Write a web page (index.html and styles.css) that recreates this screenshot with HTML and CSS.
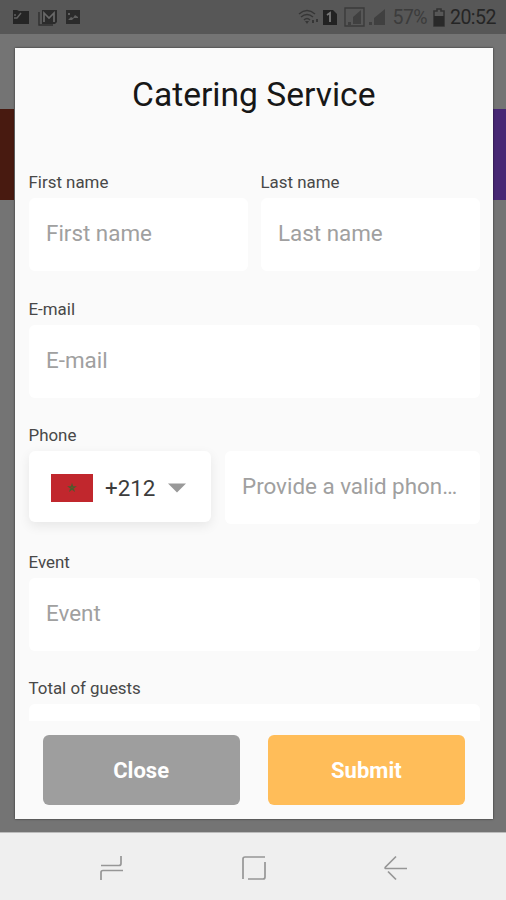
FILE: index.html
```
<!DOCTYPE html>
<html lang="en">
<head>
<meta charset="utf-8">
<title>Catering Service</title>
<link rel="stylesheet" href="styles.css">
</head>
<body>
<div class="phone">
  <header class="status">
    <div class="notifications">
      <svg width="18" height="16" viewBox="0 0 18 16"><path fill="#252525" d="M1 1h4l2 1h10v13H1z"/><path fill="none" stroke="#626262" stroke-width="1.4" d="M2 9l3 0 4-5M3 5v2"/></svg>
      <svg width="21" height="17" viewBox="0 0 21 17"><path fill="#2b2b2b" d="M5 1h15v12l-2 2H5z"/><path fill="none" stroke="#696969" stroke-width="1.7" d="M7 13V4l5 5 5-5v9"/><path fill="none" stroke="#303030" stroke-width="1.4" d="M2 3v13h14"/></svg>
      <svg width="16" height="16" viewBox="0 0 16 16"><path fill="#2b2b2b" d="M1 1h14v14H1z"/><path fill="#606060" d="M3 4h2v2H3zM3 11l3-3 2 1 2-3 3 2v1H9l-2 2z"/></svg>
    </div>
    <div class="system">
      <svg class="wifi" width="21" height="18" viewBox="0 0 21 18"><g fill="none" stroke="#363636" stroke-width="1.5"><path d="M1 6q8-7 16 0M3 9q6-5 12 0M6 12q3-3 6 0"/></g><path fill="#363636" d="M7 13h4l-2 3zM14 12h2v3h-2zM18 11h2v3h-2z"/></svg>
      <svg class="sim" width="16" height="17" viewBox="0 0 16 17"><path fill="#222" d="M1 1h10l4 4v11H1z"/><path fill="none" stroke="#777" stroke-width="1.8" d="M5 6l3-2v9"/></svg>
      <svg class="signal" width="21" height="20" viewBox="0 0 21 20"><path fill="none" stroke="#3b3b3b" stroke-width="1.4" d="M1 1h19v18H1z"/><path fill="#404040" d="M9 10l8-7v14H9zM4 15h3v3H4z"/></svg>
      <svg class="signal2" width="18" height="18" viewBox="0 0 18 18"><path fill="#404040" d="M6 10l11-9v16H6zM1 14h3v3H1z"/></svg>
      <span class="percent">57%</span>
      <svg class="battery" width="12" height="19" viewBox="0 0 12 19"><path fill="none" stroke="#333" stroke-width="1.6" d="M1 3h3V1h4v2h3v15H1z"/><path fill="#292929" d="M1 8h10v10H1z"/></svg>
      <span class="clock">20:52</span>
    </div>
  </header>
  <main class="backdrop">
    <section class="dialog">
      <h1>Catering Service</h1>
      <form class="form">
        <div class="row">
          <div class="group first"><label>First name</label><div class="field">First name</div></div>
          <div class="group"><label>Last name</label><div class="field">Last name</div></div>
        </div>
        <div class="group"><label>E-mail</label><div class="field">E-mail</div></div>
        <div class="group">
          <label>Phone</label>
          <div class="phone-row">
            <div class="country">
              <svg width="42" height="28" viewBox="0 0 42 28"><path fill="#c1272d" d="M0 0h42v28H0z"/><path fill="none" stroke="#4e5b2c" stroke-width="1.1" d="M21 10.500l2 6-5.200-3.700h6.400L19 16.500z"/></svg>
              <span>+212</span>
              <svg class="caret" width="18" height="10" viewBox="0 0 18 10"><path fill="#999" d="M0 .5h18L9 9.500z"/></svg>
            </div>
            <div class="field number">Provide a valid phon…</div>
          </div>
        </div>
        <div class="group"><label>Event</label><div class="field">Event</div></div>
        <div class="group"><label>Total of guests</label><div class="field"></div></div>
      </form>
      <div class="actions">
        <button class="close" type="button">Close</button>
        <button class="submit" type="button">Submit</button>
      </div>
    </section>
  </main>
  <nav class="nav">
    <svg width="26" height="28" viewBox="0 0 26 28"><path d="M2 11.500h18q2 0 2-2V2M24 16.500H4q-2 0-2 2V26"/></svg>
    <svg width="26" height="28" viewBox="0 0 26 28"><path d="M2 25V5q0-2 2-2h20M24 8v15q0 2-2 2H7"/></svg>
    <svg width="26" height="28" viewBox="0 0 26 28"><path d="M13 2.500L2.500 13q-.8 1 0 1.500H24M5 17.500l8 8"/></svg>
  </nav>
</div>
</body>
</html>
```
FILE: styles.css
```
* { box-sizing: border-box; }
body { margin: 0; font-family: Roboto, sans-serif; }
svg { display: block; flex: none; }
.phone { width: 506px; height: 900px; display: flex; flex-direction: column; overflow: hidden; }
.status { height: 34px; flex: none; background: #575757; display: flex; justify-content: space-between; padding: 0 10px 0 12px; }
.notifications { display: flex; align-items: center; gap: 7px; }
.system { display: flex; align-items: center; color: #303030; white-space: nowrap; }
.wifi { margin-right: 2px; }
.sim { margin-left: 1px; }
.signal { margin-left: 6px; }
.signal2 { margin-left: 3px; }
.percent { font-size: 19.500px; margin-left: 7px; color: #3c3c3c; letter-spacing: -.6px; line-height: 34px; padding-top: 2px; }
.battery { margin-left: 6px; }
.clock { font-size: 19.500px; margin-left: 5px; letter-spacing: -.5px; line-height: 34px; padding-top: 2px; color: #252525; }
.backdrop {
  height: 798px; flex: none; padding: 14px 13px 13px 14px;
  background:
    linear-gradient(#481a10, #481a10) 0 75px / 14px 91px no-repeat,
    linear-gradient(#472774, #472774) 100% 75px / 13px 91px no-repeat,
    #747474;
}
.dialog { height: 771px; margin-left: .5px; background: #fafafa; display: flex; flex-direction: column; box-shadow: 0 0 2px rgba(0,0,0,.65); }
h1 { margin: 27px 0 57px; text-align: center; font-size: 33.600px; line-height: 40px; font-weight: 400; color: #171717; }
.form { height: 549px; padding: 0 13px 0 14px; overflow: hidden; }
.row { display: flex; gap: 13px; }
.row .group { flex: 1; }
.row .first { flex: 0 0 219px; }
.group { height: 126.600px; }
label { display: block; height: 26px; line-height: 20px; font-size: 16.900px; color: #484848; }
.field { height: 73px; line-height: 71px; background: #fff; border-radius: 6px; padding-left: 17.500px; font-size: 22.400px; color: #a0a0a0; white-space: nowrap; }
.phone-row { display: flex; gap: 14px; }
.country { width: 182px; height: 71px; background: #fff; border-radius: 6px; box-shadow: 0 4px 12px rgba(0,0,0,.08); display: flex; align-items: center; padding: 2px 0 0 22.500px; font-size: 22.400px; color: #3c3c3c; }
.country span { margin-left: 12px; }
.caret { margin-left: 13px; }
.number { flex: 1; }
.actions { display: flex; gap: 28px; padding: 14px 28px 0; }
button { flex: 1; height: 70px; border: 0; border-radius: 6px; font: 700 22px Roboto, sans-serif; color: #fff; }
.close { background: #9e9e9e; }
.submit { background: #ffbd59; }
.nav { height: 68px; flex: none; background: #efefef; border-top: 1px solid #bcbcbc; display: flex; justify-content: space-between; align-items: center; padding: 3px 97px 0 99px; }
.nav path { fill: none; stroke: #969696; stroke-width: 1.700; }
```
